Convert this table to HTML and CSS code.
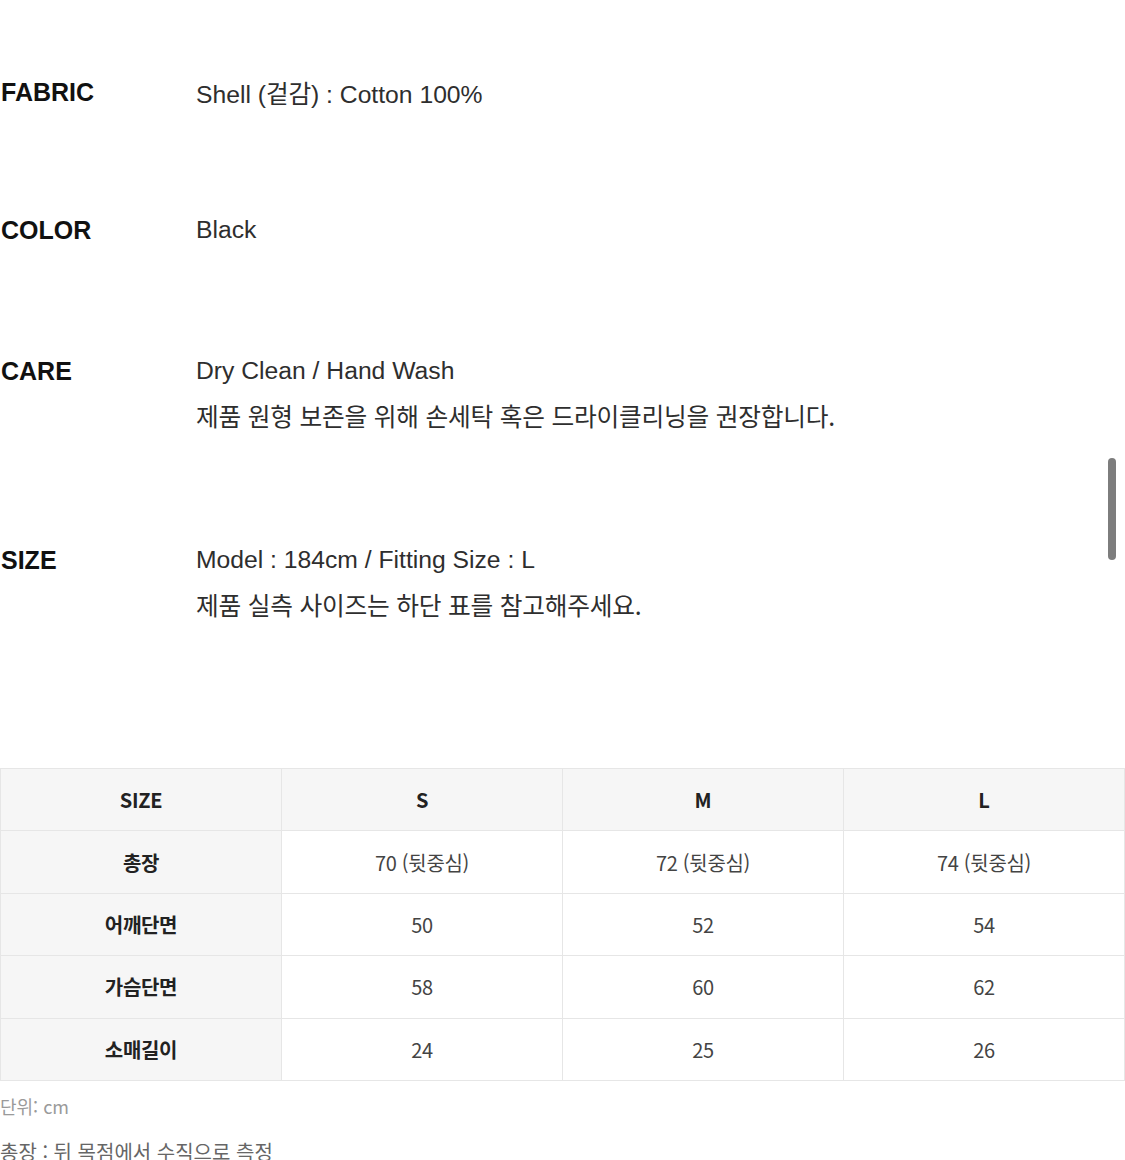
FILE: index.html
```html
<!DOCTYPE html>
<html lang="ko">
<head>
<meta charset="utf-8">
<link rel="stylesheet" href="styles.css">
</head>
<body>
<main class="page">
  <section class="specs">
    <div class="spec spec-fabric">
      <div class="label">FABRIC</div>
      <div class="value"><span class="lat">Shell (</span><span class="ko">겉감</span><span class="lat">) : Cotton 100%</span></div>
    </div>
    <div class="spec spec-color">
      <div class="label">COLOR</div>
      <div class="value"><span class="lat">Black</span></div>
    </div>
    <div class="spec spec-care">
      <div class="label">CARE</div>
      <div class="value">
        <div class="lat">Dry Clean / Hand Wash</div>
        <div class="ko">제품 원형 보존을 위해 손세탁 혹은 드라이클리닝을 권장합니다.</div>
      </div>
    </div>
    <div class="spec spec-size">
      <div class="label">SIZE</div>
      <div class="value">
        <div class="lat">Model : 184cm / Fitting Size : L</div>
        <div class="ko">제품 실측 사이즈는 하단 표를 참고해주세요.</div>
      </div>
    </div>
  </section>

  <table class="size-table">
    <thead>
      <tr><th>SIZE</th><th>S</th><th>M</th><th>L</th></tr>
    </thead>
    <tbody>
      <tr><th>총장</th><td>70 (뒷중심)</td><td>72 (뒷중심)</td><td>74 (뒷중심)</td></tr>
      <tr><th>어깨단면</th><td>50</td><td>52</td><td>54</td></tr>
      <tr><th>가슴단면</th><td>58</td><td>60</td><td>62</td></tr>
      <tr><th>소매길이</th><td>24</td><td>25</td><td>26</td></tr>
    </tbody>
  </table>

  <p class="unit">단위: cm</p>
  <p class="note">총장 : 뒤 목점에서 수직으로 측정</p>
</main>
<div class="scrollbar"></div>
</body>
</html>
```

FILE: styles.css
```css
html, body {
  margin: 0;
  padding: 0;
  background: #fff;
}
body {
  height: 1160px;
  overflow: hidden;
  position: relative;
  font-family: "Liberation Sans", Arial, "Noto Sans CJK KR", sans-serif;
  color: #222;
}
.page {
  width: 1125px;
}
.specs {
  display: flex;
  flex-direction: column;
  padding-top: 70px;
}
.spec {
  display: flex;
  align-items: flex-start;
}
.spec-color { margin-top: 91px; }
.spec-care { margin-top: 97px; }
.spec-size { margin-top: 101px; }
.label {
  width: 196px;
  padding-left: 1px;
  box-sizing: border-box;
  font-size: 25px;
  font-weight: bold;
  line-height: 44px;
  color: #111;
}
.value {
  font-size: 24.7px;
  line-height: 44px;
  color: #2e2e2e;
}
.ko {
  font-family: "Noto Sans CJK KR", sans-serif;
  letter-spacing: -0.2px;
}
.size-table {
  margin-top: 142px;
  width: 1125px;
  border-collapse: collapse;
  table-layout: fixed;
  font-family: "Noto Sans CJK KR", "Noto Sans", sans-serif;
}
.size-table th,
.size-table td {
  border: 1px solid #e6e6e6;
  height: 61.4px;
  padding: 0;
  text-align: center;
  vertical-align: middle;
  font-size: 20px;
  letter-spacing: -0.3px;
}
.size-table thead th {
  background: #f6f6f6;
  font-weight: bold;
  color: #222;
}
.size-table tbody th {
  background: #f6f6f6;
  font-weight: bold;
  color: #222;
}
.size-table td {
  color: #444;
  background: #fff;
}
.unit {
  margin: 12px 0 0;
  font-family: "Noto Sans CJK KR", sans-serif;
  font-size: 18px;
  color: #9a9a9a;
  line-height: 26px;
}
.note {
  margin: 20px 0 0;
  font-family: "Noto Sans CJK KR", sans-serif;
  font-size: 20px;
  color: #666;
  line-height: 26px;
}
.scrollbar {
  position: absolute;
  top: 458px;
  left: 1108px;
  width: 8px;
  height: 102px;
  border-radius: 4px;
  background: #7d7d7d;
}
```
